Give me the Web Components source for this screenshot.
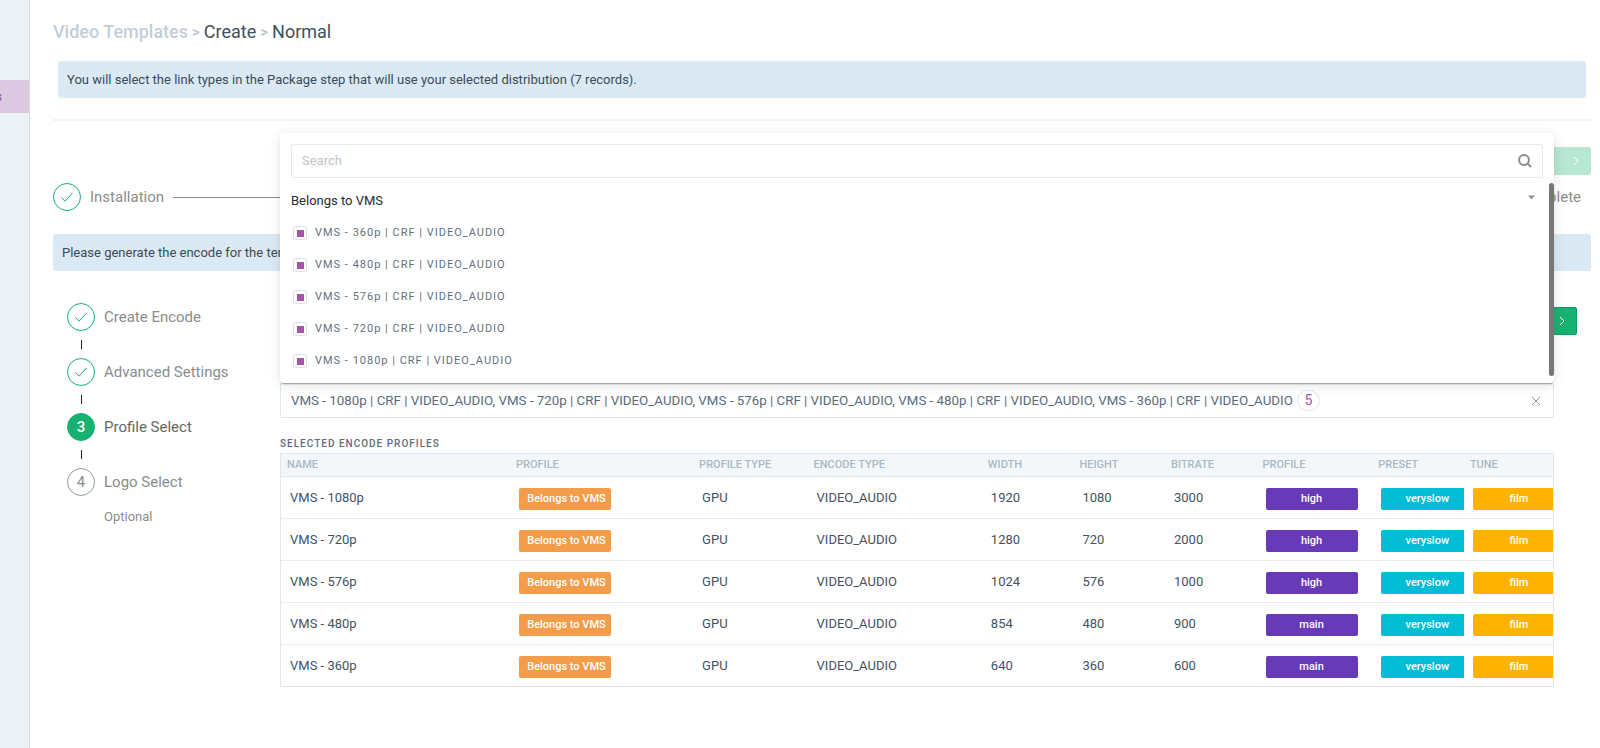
<!DOCTYPE html>
<html lang="en">
<head>
<meta charset="UTF-8">
<meta name="viewport" content="width=device-width, initial-scale=1">
<title>Video Templates - Create</title>
<style>
  * {
    box-sizing: border-box;
  }

  body {
    margin: 0;
    min-height: 100vh;
    background: #fff;
    color: #3f505e;
    font-family: Roboto, "Liberation Sans", sans-serif;
    font-size: 13px;
    line-height: 20px;
  }
</style>
</head>
<body>
<encode-page></encode-page>

<script>
const CHECK = '<svg width="14" height="14" viewBox="0 0 14 14" fill="none" stroke="currentColor"><path d="M1.5 7.5L5 11.2L12.5 3"/></svg>';

const PROFILES = [
  { name: 'VMS - 1080p', width: 1920, height: 1080, bitrate: 3000, profile: 'high' },
  { name: 'VMS - 720p', width: 1280, height: 720, bitrate: 2000, profile: 'high' },
  { name: 'VMS - 576p', width: 1024, height: 576, bitrate: 1000, profile: 'high' },
  { name: 'VMS - 480p', width: 854, height: 480, bitrate: 900, profile: 'main' },
  { name: 'VMS - 360p', width: 640, height: 360, bitrate: 600, profile: 'main' }
];

const profileLabel = (p) => `${p.name} | CRF | VIDEO_AUDIO`;

// Left rail, only its right edge is on screen
class SideRail extends HTMLElement {
  connectedCallback() {
    this.attachShadow({ mode: 'open' }).innerHTML = `
    <style>
      :host {
        display: block;
        box-sizing: border-box;
        width: 30px;
        flex: none;
        padding-top: 80px;
        overflow: hidden;
        background: #ebf1f5;
        border-right: 1px solid #d0dce6;
      }
      a {
        display: flex;
        justify-content: flex-end;
        align-items: center;
        height: 33px;
        padding-right: 27px;
        background: #dac9e1;
        color: #a854a5;
        font-size: 12px;
        font-weight: 500;
        text-decoration: none;
      }
    </style>
    <nav><a href="#" aria-label="Video Templates">s</a></nav>`;
  }
}

class BreadCrumb extends HTMLElement {
  connectedCallback() {
    this.attachShadow({ mode: 'open' }).innerHTML = `
    <style>
      :host {
        display: block;
        font-size: 18px;
        line-height: 24px;
      }
      nav {
        display: flex;
        align-items: center;
        gap: 4px;
      }
      a {
        color: #c3ced8;
        font-weight: 500;
        text-decoration: none;
      }
      a.dark, b {
        color: #3f505e;
        font-weight: 400;
      }
      span {
        color: #b5c1cb;
        font-size: 15px;
        font-weight: 500;
      }
    </style>
    <nav aria-label="Breadcrumb">
      <a href="#">Video Templates</a><span>&gt;</span><a class="dark" href="#">Create</a><span>&gt;</span><b>Normal</b>
    </nav>`;
  }
}

class InfoBar extends HTMLElement {
  connectedCallback() {
    this.attachShadow({ mode: 'open' }).innerHTML = `
    <style>
      :host {
        display: block;
        padding: 9px 9px 8px;
        border-radius: 3px;
        background: #dbe9f5;
        color: #3c4b58;
      }
    </style>
    <slot></slot>`;
  }
}

class NextButton extends HTMLElement {
  connectedCallback() {
    this.attachShadow({ mode: 'open' }).innerHTML = `
    <style>
      :host { display: block; }
      button {
        display: flex;
        align-items: center;
        justify-content: flex-end;
        width: 80px;
        height: 28px;
        padding: 0 8px;
        border: 1px solid #109f62;
        border-radius: 2px;
        background: #17b271;
        color: #fff;
      }
      button:disabled {
        border-color: #17b271;
        opacity: .3;
      }
    </style>
    <button type="button" aria-label="Next" ${this.hasAttribute('disabled') ? 'disabled' : ''}>
      <svg width="12" height="12" viewBox="0 0 12 12" fill="none" stroke="currentColor"><path d="M4 2L8 6L4 10"/></svg>
    </button>`;
  }
}

// One step of a stepper. state: done | active | todo
class StepItem extends HTMLElement {
  connectedCallback() {
    const state = this.getAttribute('state');
    const mark = state === 'done' ? CHECK : this.getAttribute('number');
    this.attachShadow({ mode: 'open' }).innerHTML = `
    <style>
      :host {
        display: flex;
        align-items: center;
        gap: 9px;
        color: #8c8c8c;
        font-size: 15px;
      }
      .circle {
        box-sizing: border-box;
        display: flex;
        align-items: center;
        justify-content: center;
        width: 28px;
        height: 28px;
        flex: none;
        border: 1px solid #999;
        border-radius: 50%;
      }
      .done {
        border-color: #17b271;
        color: #17b271;
      }
      .active {
        border-color: #17b271;
        background: #17b271;
        color: #fff;
        font-weight: 500;
      }
      .active + span { color: #666; }
    </style>
    <div class="circle ${state}">${mark}</div><span><slot></slot></span>`;
  }
}

// Horizontal stepper across the page
class TopSteps extends HTMLElement {
  connectedCallback() {
    this.attachShadow({ mode: 'open' }).innerHTML = `
    <style>
      :host {
        display: flex;
        align-items: center;
        gap: 9px;
        padding-right: 10px;
      }
      i {
        flex: 1;
        height: 1px;
        background: #8c8c8c;
      }
    </style>
    <step-item state="done">Installation</step-item>
    <i></i>
    <step-item state="todo" number="3">Complete</step-item>`;
  }
}

class SideSteps extends HTMLElement {
  connectedCallback() {
    this.attachShadow({ mode: 'open' }).innerHTML = `
    <style>
      :host { display: block; }
      i {
        display: block;
        width: 1px;
        height: 9px;
        margin: 9px 0 9px 14px;
        background: #222;
      }
      p {
        margin: 11px 0 0 37px;
        color: #8c8c8c;
      }
    </style>
    <step-item state="done">Create Encode</step-item>
    <i></i>
    <step-item state="done">Advanced Settings</step-item>
    <i></i>
    <step-item state="active" number="3">Profile Select</step-item>
    <i></i>
    <step-item state="todo" number="4">Logo Select</step-item>
    <p>Optional</p>`;
  }
}

class ProfilePicker extends HTMLElement {
  connectedCallback() {
    const options = [...PROFILES].reverse().map((p, i) => `
        <label for="opt${i}"><input type="checkbox" id="opt${i}" checked>${profileLabel(p)}</label>`).join('');

    this.attachShadow({ mode: 'open' }).innerHTML = `
    <style>
      * { box-sizing: border-box; }
      :host {
        display: block;
        position: relative;
      }
      .box {
        display: flex;
        align-items: center;
        height: 35px;
        padding: 0 11px 0 10px;
        border: 1px solid #dfe6ed;
        border-radius: 2px;
      }
      button {
        padding: 0;
        border: 0;
        background: none;
        color: inherit;
        font-family: inherit;
      }
      .value {
        display: flex;
        flex: 1;
        align-items: center;
        gap: 4px;
        color: #5a6c7c;
        text-align: left;
      }
      .count {
        width: 23px;
        height: 21px;
        border: 1px solid #dfe6ed;
        border-radius: 11px;
        color: #a854a5;
        font-size: 14px;
        line-height: 19px;
        text-align: center;
      }
      .clear {
        display: flex;
        color: #999;
      }

      /* Menu opens upwards, over the page */
      .menu {
        position: absolute;
        right: 0;
        bottom: 100%;
        left: 0;
        z-index: 10;
        display: flex;
        flex-direction: column;
        gap: 5px;
        padding: 11px 0 7px;
        border-radius: 4px;
        background: #fff;
        box-shadow: 0 2px 2px -1px rgba(40, 55, 70, .4), 0 2px 12px rgba(40, 55, 70, .14);
      }
      .search {
        display: flex;
        align-items: center;
        height: 34px;
        margin: 0 11px;
        padding: 0 10px;
        border: 1px solid #e3eaf0;
        border-radius: 2px;
        color: #8c8c8c;
      }
      .search input {
        flex: 1;
        min-width: 0;
        padding: 0;
        border: 0;
        outline: 0;
        background: none;
        color: #3f505e;
        font: inherit;
      }
      .search input::placeholder { color: #bfc4c9; }
      .search button { display: flex; }
      .list {
        display: flex;
      }
      .options {
        display: flex;
        flex: 1;
        flex-direction: column;
        gap: 12px;
        padding: 6px 13px 5px 11px;
      }
      .group {
        display: flex;
        align-items: center;
        justify-content: space-between;
        height: 22px;
        color: #222b33;
        font-size: 13px;
      }
      .group svg { color: #8c8c8c; margin-bottom: 6px; }
      label {
        display: flex;
        align-items: center;
        gap: 8px;
        padding-left: 2px;
        color: #62717e;
        font-size: 11px;
        letter-spacing: 1px;
        line-height: 20px;
      }
      input[type=checkbox] {
        appearance: none;
        width: 14px;
        height: 14px;
        margin: 0;
        padding: 3px 2px 2px 3px;
        border: 1px solid #d8e1ea;
        border-radius: 2px;
      }
      input[type=checkbox]:checked {
        background: #a854a5 content-box;
      }
      .thumb {
        width: 5px;
        flex: none;
        border-radius: 3px;
        background: #777;
      }
    </style>
    <div class="menu">
      <div class="search">
        <input type="text" placeholder="Search" aria-label="Search">
        <button type="button" aria-label="Search profiles">
          <svg width="14" height="14" viewBox="0 0 14 14" fill="none" stroke="currentColor" stroke-width="2"><circle cx="6" cy="6" r="4.9"/><path d="M9.6 9.6L13 13"/></svg>
        </button>
      </div>
      <div class="list">
        <div class="options">
          <button class="group" type="button" aria-expanded="true">Belongs to VMS
            <svg width="9" height="5" viewBox="0 0 9 5" fill="currentColor"><path d="M1 0.5H8L4.5 4.2Z"/></svg>
          </button>${options}
        </div>
        <div class="thumb"></div>
      </div>
    </div>
    <div class="box">
      <button class="value" type="button">${PROFILES.map(profileLabel).join(', ')}<span class="count">5</span></button>
      <button class="clear" type="button" aria-label="Clear">
        <svg width="12" height="12" viewBox="0 0 12 12" fill="none" stroke="currentColor"><path d="M2 2L10 10M10 2L2 10"/></svg>
      </button>
    </div>`;
  }
}

class TagBadge extends HTMLElement {
  connectedCallback() {
    this.attachShadow({ mode: 'open' }).innerHTML = `
    <style>
      :host {
        display: block;
        box-sizing: border-box;
        width: 92px;
        height: 22px;
        border-radius: 2px;
        background: var(--tag, #673ab7);
        color: #fff;
        font-size: 11px;
        font-weight: 500;
        line-height: 22px;
        text-align: center;
      }
      :host([kind=source]) { --tag: #f39c4a; padding-left: 3px; }
      :host([kind=preset]) { --tag: #00bcd4; }
      :host([kind=tune]) { --tag: #ffb300; }
    </style>
    <slot></slot>`;
  }
}

class ProfileTable extends HTMLElement {
  connectedCallback() {
    const rows = PROFILES.map((p) => `
        <tr>
          <td>${p.name}</td>
          <td class="tag"><tag-badge kind="source">Belongs to VMS</tag-badge></td>
          <td>GPU</td>
          <td>VIDEO_AUDIO</td>
          <td>${p.width}</td>
          <td>${p.height}</td>
          <td>${p.bitrate}</td>
          <td class="tag"><tag-badge>${p.profile}</tag-badge></td>
          <td class="tag"><tag-badge kind="preset">veryslow</tag-badge></td>
          <td class="tag"><tag-badge kind="tune">film</tag-badge></td>
        </tr>`).join('');

    this.attachShadow({ mode: 'open' }).innerHTML = `
    <style>
      * { box-sizing: border-box; }
      :host { display: block; }
      .frame {
        overflow: hidden;
        border: 1px solid #dfe6ed;
      }
      table {
        width: 100%;
        border-spacing: 0;
        table-layout: fixed;
      }
      h2 {
        margin: 0;
        color: #5f6e7b;
        font-size: 10px;
        font-weight: 500;
        letter-spacing: 1px;
        line-height: 18px;
      }
      th {
        height: 23px;
        padding: 0 6px;
        border-bottom: 1px solid #dfe6ed;
        background: #f4f7fa;
        color: #abb9c4;
        font-size: 11px;
        font-weight: 500;
        line-height: 20px;
        text-align: left;
        white-space: nowrap;
      }
      td {
        height: 42px;
        padding: 0 0 0 9px;
        overflow: hidden;
        border-bottom: 1px solid #e6ecf0;
        color: #44525f;
        vertical-align: middle;
      }
      .tag { padding-top: 3px; }
      tr:last-child td {
        height: 41px;
        border-bottom: 0;
      }
    </style>
    <h2 id="title">SELECTED ENCODE PROFILES</h2>
    <div class="frame">
      <table aria-labelledby="title">
        <colgroup>
          <col style="width: 18%"><col style="width: 14.4%"><col style="width: 9%"><col style="width: 13.7%"><col style="width: 7.2%">
          <col style="width: 7.2%"><col style="width: 7.2%"><col style="width: 9.1%"><col style="width: 7.2%"><col style="width: 7%">
        </colgroup>
        <thead>
          <tr><th>NAME</th><th>PROFILE</th><th>PROFILE TYPE</th><th>ENCODE TYPE</th><th>WIDTH</th><th>HEIGHT</th><th>BITRATE</th><th>PROFILE</th><th>PRESET</th><th>TUNE</th></tr>
        </thead>
        <tbody>${rows}
        </tbody>
      </table>
    </div>`;
  }
}

class EncodePage extends HTMLElement {
  connectedCallback() {
    this.attachShadow({ mode: 'open' }).innerHTML = `
    <style>
      * { box-sizing: border-box; }
      :host {
        display: flex;
        min-height: 100vh;
      }
      main {
        flex: 1;
        min-width: 0;
        padding: 20px 9px 20px 23px;
      }
      .notice { margin: 17px 5px 21px; }
      hr {
        height: 2px;
        margin: 0 0 26px;
        border: 0;
        background: #f1f3f5;
      }
      .actions {
        display: flex;
        justify-content: flex-end;
      }
      top-steps { margin: 8px 0 23px; }
      .body {
        display: flex;
        padding: 32px 14px 0;
      }
      side-steps {
        width: 190px;
        flex: none;
      }
      .content {
        flex: 1;
        min-width: 0;
        padding-top: 4px;
      }
      .panel {
        display: flex;
        flex-direction: column;
        gap: 17px;
        padding: 48px 23px 0;
      }
    </style>
    <side-rail></side-rail>
    <main>
      <bread-crumb></bread-crumb>
      <info-bar class="notice">You will select the link types in the Package step that will use your selected distribution (7 records).</info-bar>
      <hr>
      <div class="actions"><next-button disabled></next-button></div>
      <top-steps></top-steps>
      <info-bar>Please generate the encode for the template.</info-bar>
      <div class="body">
        <side-steps></side-steps>
        <div class="content">
          <div class="actions"><next-button></next-button></div>
          <div class="panel">
            <profile-picker></profile-picker>
            <profile-table></profile-table>
          </div>
        </div>
      </div>
    </main>`;
  }
}

customElements.define('side-rail', SideRail);
customElements.define('bread-crumb', BreadCrumb);
customElements.define('info-bar', InfoBar);
customElements.define('next-button', NextButton);
customElements.define('step-item', StepItem);
customElements.define('top-steps', TopSteps);
customElements.define('side-steps', SideSteps);
customElements.define('profile-picker', ProfilePicker);
customElements.define('tag-badge', TagBadge);
customElements.define('profile-table', ProfileTable);
customElements.define('encode-page', EncodePage);
</script>
</body>
</html>
